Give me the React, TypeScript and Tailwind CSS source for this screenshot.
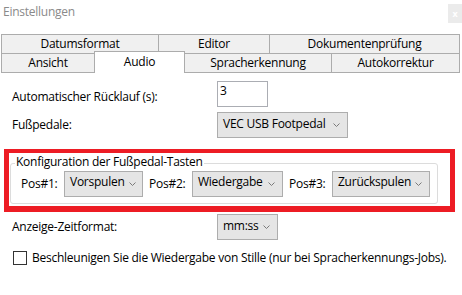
import React from "react";

function Chevron() {
  return (
    <svg width="7" height="4" viewBox="0 0 7 4" className="shrink-0">
      <polyline points="0.5,0.5 3.5,3.5 6.5,0.5" fill="none" stroke="#7a7a7a" strokeWidth="1" />
    </svg>
  );
}

function Combo({ value, w }: { value: string; w: string }) {
  return (
    <div className={`${w} h-[26px] shrink-0 flex items-center justify-between gap-[4px] pl-[5px] pr-[7px] bg-[#e5e5e5] border border-[#adadad]`}>
      <span className="-mt-[3px] whitespace-nowrap">{value}</span>
      <Chevron />
    </div>
  );
}

function Tab({ label, w, active }: { label: string; w: string; active?: boolean }) {
  if (active) {
    return (
      <div className={`${w} relative z-10 -ml-px h-[22px] flex items-center justify-center bg-white border border-b-0 border-[#acacac] pb-[2px]`}>
        {label}
      </div>
    );
  }
  return (
    <div className={`${w} -ml-px first:ml-0 h-[20px] flex items-center justify-center bg-[#f0f0f0] border border-[#acacac]`}>
      {label}
    </div>
  );
}

export default function App() {
  return (
    <div className="w-[462px] h-[295px] bg-white text-black text-[12px] tracking-[-0.25px] leading-none overflow-hidden" style={{ fontFamily: '"Segoe UI", "Open Sans", "Noto Sans", sans-serif' }}>
      {/* title bar */}
      <div className="h-[34px] flex justify-between pl-[3px]">
        <span className="mt-[6px] text-[12px] text-[#8a8a8a]">Einstellungen</span>
        <div className="mt-[4px] w-[14px] h-[19px] bg-[#ebebeb] flex items-center justify-center text-[9px] text-white font-bold">x</div>
      </div>

      {/* tabs */}
      <div className="pl-px">
        <div className="flex">
          <Tab label="Datumsformat" w="w-[158px]" />
          <Tab label="Editor" w="w-[112px]" />
          <Tab label="Dokumentenprüfung" w="w-[191px]" />
        </div>
        <div className="flex items-end -mt-[3px]">
          <Tab label="Ansicht" w="w-[94px]" />
          <Tab label="Audio" w="w-[91px]" active />
          <Tab label="Spracherkennung" w="w-[148px]" />
          <Tab label="Autokorrektur" w="w-[129px]" />
        </div>
      </div>

      {/* content */}
      <div className="pt-[8px]">
        <div className="flex items-center pl-[12px] h-[26px]">
          <span className="w-[205px] mt-[5px]">Automatischer Rücklauf (s):</span>
          <div className="w-[51px] h-[26px] border border-[#abadb3] bg-white pl-[2px] pt-[3px]">3</div>
        </div>
        <div className="flex items-center pl-[12px] mt-[5px]">
          <span className="w-[205px]">Fußpedale:</span>
          <Combo value="VEC USB Footpedal" w="w-[131px]" />
        </div>

        <div className="ml-[4px] mt-[11px] w-[451px] h-[63px] border-[#ed1c24] border-x-[5px] border-t-[4px] border-b-[6px] pl-[1px] pr-[12px] pt-[10px]">
          <div className="relative h-[41px] border border-[#dcdcdc] rounded-[3px] flex items-center pl-[10px]">
            <span className="absolute -top-[8px] left-[4px] bg-white px-[1px]">Konfiguration der Fußpedal-Tasten</span>
            <span className="w-[43px]">Pos#1:</span>
            <Combo value="Vorspulen" w="w-[79px]" />
            <span className="w-[43px] ml-[6px]">Pos#2:</span>
            <Combo value="Wiedergabe" w="w-[91px]" />
            <span className="w-[43px] ml-[6px]">Pos#3:</span>
            <Combo value="Zurückspulen" w="w-[98px]" />
          </div>
        </div>

        <div className="flex items-center pl-[12px] mt-[2px]">
          <span className="w-[205px]">Anzeige-Zeitformat:</span>
          <Combo value="mm:ss" w="w-[61px]" />
        </div>
        <div className="flex items-center pl-[13px] mt-[11px] gap-[5px]">
          <div className="w-[14px] h-[14px] border border-[#333333] bg-white shrink-0" />
          <span className="whitespace-nowrap">Beschleunigen Sie die Wiedergabe von Stille (nur bei Spracherkennungs-Jobs).</span>
        </div>
      </div>
    </div>
  );
}
